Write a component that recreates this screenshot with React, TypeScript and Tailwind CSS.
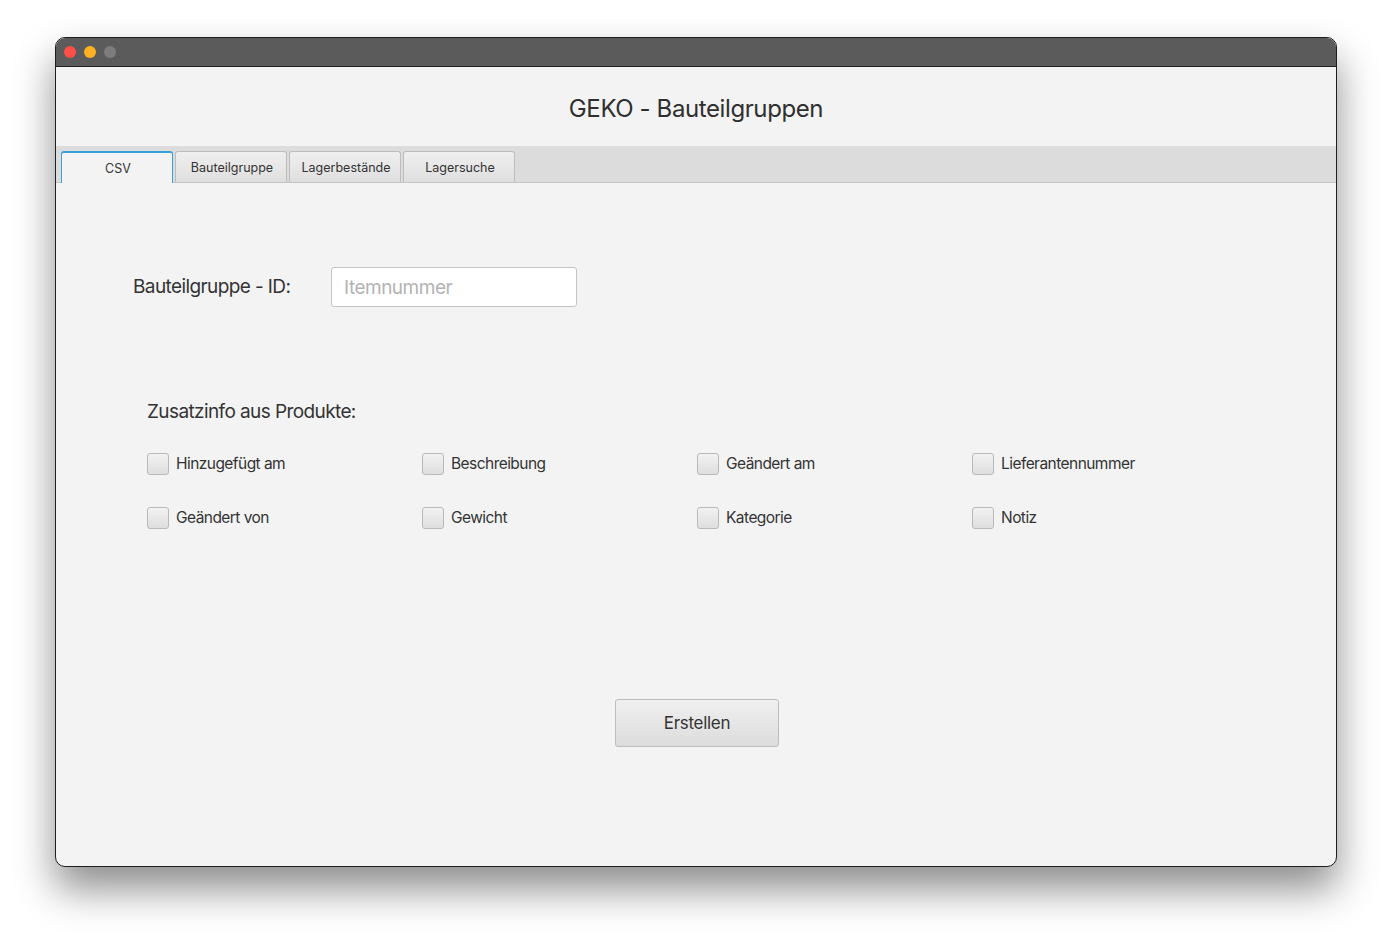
import React from "react";

const font = { fontFamily: "Inter, 'Noto Sans', sans-serif" };

function Check({ label }: { label: string }) {
  return (
    <div className="flex items-center h-[22px]">
      <div className="w-[22px] h-[22px] rounded-[3px] border border-[#b9b9b9] bg-gradient-to-b from-[#f2f2f2] to-[#dedede] shrink-0" />
      <span className="ml-[7px] text-[15.5px] text-[#333] tracking-[-0.55px]">{label}</span>
    </div>
  );
}

export default function App() {
  const tabs = ["CSV", "Bauteilgruppe", "Lagerbestände", "Lagersuche"];
  return (
    <div className="w-[1392px] h-[940px] bg-white pt-[37px] pl-[55px]" style={font}>
      <div className="w-[1282px] h-[830px] rounded-[10px] border border-[#1e1e1e] bg-[#f3f3f3] overflow-hidden flex flex-col shadow-[0_22px_40px_rgba(0,0,0,0.45)]">
        <div className="h-[29px] bg-[#5a5b5a] border-b border-[#222] flex items-center pl-[8px] gap-[8px] shrink-0">
          <div className="w-[12px] h-[12px] rounded-full bg-[#fe5048]" />
          <div className="w-[12px] h-[12px] rounded-full bg-[#fdb123]" />
          <div className="w-[12px] h-[12px] rounded-full bg-[#7c7c7c]" />
        </div>
        <div className="h-[79px] pt-[4px] flex items-center justify-center text-[24px] text-[#2f2f2f] tracking-[-0.4px] shrink-0">
          GEKO - Bauteilgruppen
        </div>
        <div className="h-[37px] bg-[#dcdcdc] border-b border-[#c4c4c4] flex items-end pl-[5px] gap-[2px] shrink-0">
          {tabs.map((t, i) =>
            i === 0 ? (
              <div
                key={t}
                className="w-[112px] h-[32px] pt-[2px] pl-[2px] bg-[#f3f3f3] border border-b-0 border-[#3ba0d9] border-t-[2px] rounded-t-[3px] flex items-center justify-center text-[12.5px] text-[#333] -mb-px"
              >
                {t}
              </div>
            ) : (
              <div
                key={t}
                className="w-[112px] h-[31px] pt-[2px] pl-[2px] bg-gradient-to-b from-[#efefef] to-[#dfdfdf] border border-b-0 border-[#bdbdbd] rounded-t-[3px] flex items-center justify-center text-[12.5px] text-[#333]"
              >
                {t}
              </div>
            )
          )}
        </div>
        <div className="flex-1 flex flex-col">
          <div className="flex items-center mt-[84px] ml-[77px]">
            <span className="text-[19px] text-[#333] tracking-[-0.6px] w-[198px]">Bauteilgruppe - ID:</span>
            <input
              placeholder="Itemnummer"
              className="w-[246px] h-[40px] bg-white border border-[#c4c4c4] rounded-[3px] px-[12px] text-[19px] tracking-[-0.5px] placeholder-[#b3b3b3] outline-none"
            />
          </div>
          <div className="ml-[91px] mt-[91px] text-[19px] text-[#333] tracking-[-0.6px]">Zusatzinfo aus Produkte:</div>
          <div className="ml-[91px] mt-[26px] grid grid-cols-[275px_275px_275px_275px] gap-y-[32px]">
            <Check label="Hinzugefügt am" />
            <Check label="Beschreibung" />
            <Check label="Geändert am" />
            <Check label="Lieferantennummer" />
            <Check label="Geändert von" />
            <Check label="Gewicht" />
            <Check label="Kategorie" />
            <Check label="Notiz" />
          </div>
          <div className="flex justify-center mt-[170px]">
            <button className="w-[164px] h-[48px] pt-[3px] rounded-[3px] border border-[#bcbcbc] bg-gradient-to-b from-[#f0f0f0] to-[#dcdcdc] text-[17px] text-[#333] tracking-[-0.3px] ml-[2px]">
              Erstellen
            </button>
          </div>
        </div>
      </div>
    </div>
  );
}
